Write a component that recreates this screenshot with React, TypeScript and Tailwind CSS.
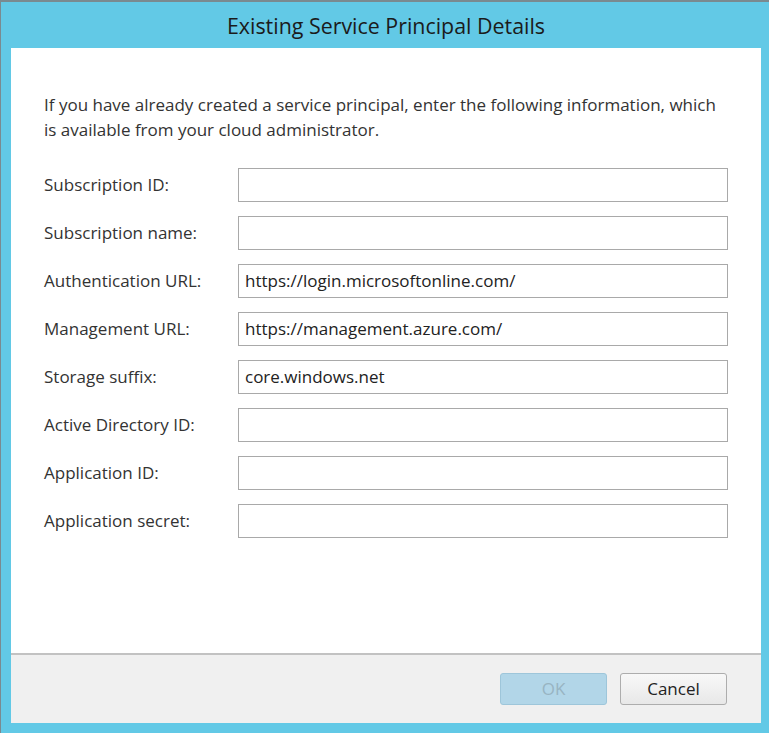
import React from "react";

interface Field {
  label: string;
  value: string;
}

const fields: Field[] = [
  { label: "Subscription ID:", value: "" },
  { label: "Subscription name:", value: "" },
  { label: "Authentication URL:", value: "https://login.microsoftonline.com/" },
  { label: "Management URL:", value: "https://management.azure.com/" },
  { label: "Storage suffix:", value: "core.windows.net" },
  { label: "Active Directory ID:", value: "" },
  { label: "Application ID:", value: "" },
  { label: "Application secret:", value: "" },
];

const App: React.FC = () => {
  return (
    <div
      className="flex h-[733px] w-[769px] flex-col border-t-[2px] border-l border-[#7a8a90] bg-[#62c9e6] pr-[8px] pb-[10px] pl-[10px] text-[#333]"
      style={{ fontFamily: '"Segoe UI", "Open Sans", sans-serif' }}
    >
      {/* Title bar */}
      <div className="flex h-[46px] shrink-0 items-center justify-center pt-[2px] text-[21.4px] text-[#1b1b1b]">
        Existing Service Principal Details
      </div>

      {/* Body */}
      <div className="flex flex-1 flex-col bg-white pr-[33px] pl-[33px] pt-[44px]">
        <p className="mb-[26px] text-[17px] leading-[25px] whitespace-nowrap">
          If you have already created a service principal, enter the following information, which
          <br />
          is available from your cloud administrator.
        </p>
        <div className="flex flex-col gap-[14px]">
          {fields.map((f) => (
            <div key={f.label} className="flex items-center">
              <label className="w-[194px] shrink-0 text-[17px]">{f.label}</label>
              <div className="flex h-[34px] w-[490px] items-center border border-[#a9a9a9] bg-white px-[6px] text-[17px] text-[#222]">
                {f.value}
              </div>
            </div>
          ))}
        </div>
      </div>

      {/* Footer */}
      <div className="flex h-[70px] shrink-0 items-center justify-end gap-[13px] border-t-2 border-[#c2c2c2] bg-[#f0f0f0] pr-[34px]">
        <button className="h-[32px] w-[107px] rounded-[3px] border border-[#9ec6da] bg-[#b2d6e8] text-[17px] text-[#98b4c2]">
          OK
        </button>
        <button className="h-[32px] w-[107px] rounded-[3px] border border-[#adadad] bg-gradient-to-b from-[#f8f8f8] to-[#e8e8e8] text-[17px] text-[#222]">
          Cancel
        </button>
      </div>
    </div>
  );
};

export default App;
